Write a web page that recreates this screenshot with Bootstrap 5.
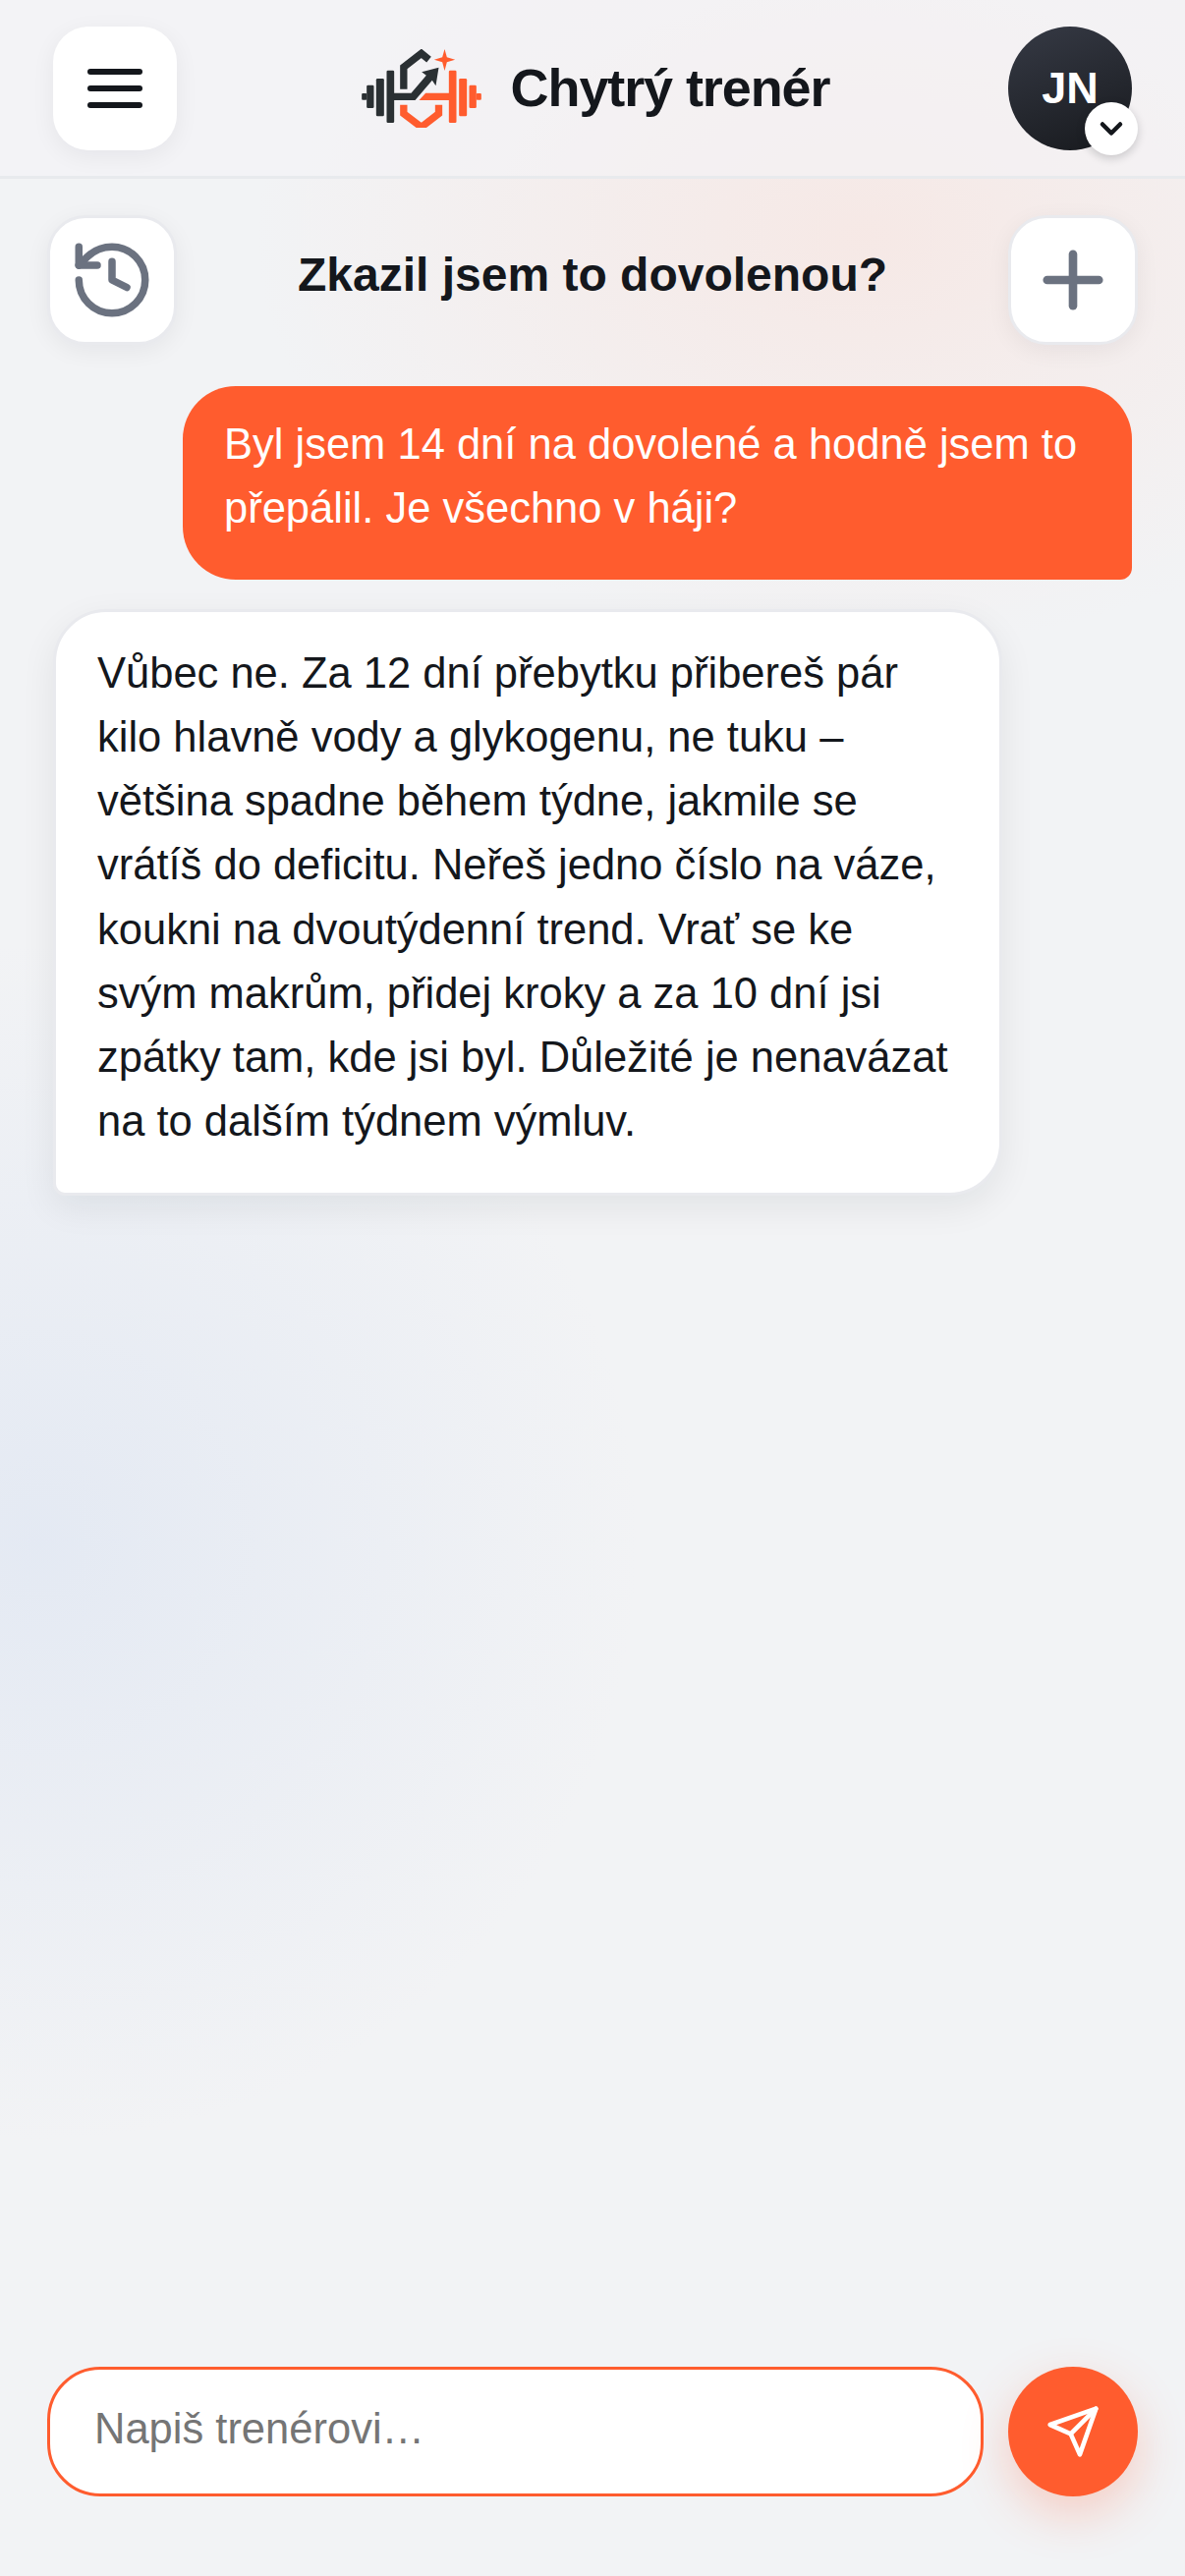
<!DOCTYPE html>
<html lang="cs">
  <head>
    <meta charset="UTF-8" />
    <meta name="viewport" content="width=device-width, initial-scale=1.0" />
    <title>Chytrý trenér</title>
    <link
      rel="stylesheet"
      href="https://cdn.jsdelivr.net/npm/bootstrap@5.3.3/dist/css/bootstrap.min.css"
    />
    <script src="https://cdn.jsdelivr.net/npm/bootstrap@5.3.3/dist/js/bootstrap.bundle.min.js"></script>
    <style>
      body {
        min-height: 2622px;
        font-family: "Liberation Sans", Arial, sans-serif;
        font-size: 43.5px;
        color: #14171c;
        background:
          radial-gradient(circle 610px at 40px 1570px, rgba(205, 218, 240, 0.38), rgba(205, 218, 240, 0) 100%),
          radial-gradient(ellipse 620px 420px at 880px 240px, rgba(250, 222, 214, 0.5), rgba(250, 222, 214, 0) 100%),
          #f2f3f5;
      }
      .top-bar {
        height: 182px;
        padding: 0 54px;
        background: rgba(243, 244, 246, 0.6);
        border-bottom: 3px solid #e8eaed;
      }
      .square-btn {
        width: 126px;
        height: 126px;
        padding: 0;
        border-radius: 36px;
        background: #fff;
        box-shadow: 0 6px 24px rgba(20, 23, 28, 0.06);
      }
      .square-btn.outlined {
        width: 132px;
        height: 132px;
        border: 3px solid #e9eaee;
        border-radius: 39px;
        color: #6b7280;
      }
      .menu-lines {
        width: 56px;
      }
      .menu-lines span {
        display: block;
        height: 6px;
        margin: 11px 0;
        border-radius: 3px;
        background: #14171c;
      }
      .brand-logo {
        margin-right: 30px;
      }
      .brand-name {
        font-size: 54px;
        font-weight: 700;
        letter-spacing: -1.1px;
      }
      .top-brand {
        margin-left: 6px;
      }
      .user-avatar {
        width: 126px;
        height: 126px;
        font-size: 45px;
        font-weight: 700;
        background: linear-gradient(160deg, #363a45, #17191d);
      }
      .avatar-caret {
        right: -6px;
        bottom: -5px;
        width: 54px;
        height: 54px;
        background: #fff;
        box-shadow: 0 3px 10px rgba(20, 23, 28, 0.2);
      }
      .sub-bar {
        padding: 37px 48px 0;
      }
      .chat-title {
        font-size: 48px;
        font-weight: 700;
        margin-top: -10px;
      }
      .chat-list {
        padding: 42px 54px 0;
        gap: 30px;
      }
      .bubble {
        width: 966px;
        line-height: 65.25px;
      }
      .bubble-user {
        padding: 27px 42px 39px;
        color: #fff;
        background: #ff5c2e;
        border-radius: 54px 54px 12px 54px;
      }
      .bubble-coach {
        padding: 30px 42px 39px;
        background: #fff;
        border: 3px solid #e9eaee;
        border-radius: 54px 54px 54px 12px;
        box-shadow: 0 12px 36px rgba(20, 23, 28, 0.07);
      }
      .composer {
        padding: 0 48px 81px;
        gap: 25px;
      }
      .composer-input.form-control {
        height: 132px;
        padding: 0 45px 6px;
        font-size: 43.5px;
        color: #14171c;
        background: #fff;
        border: 3px solid #ff5c2e;
        border-radius: 54px;
        box-shadow: none;
      }
      .composer-input::placeholder {
        color: #757575;
        opacity: 1;
      }
      .send-btn {
        width: 132px;
        height: 132px;
        padding: 0;
        background: #ff5c2e;
        border: 0;
        box-shadow: 0 18px 48px rgba(255, 92, 46, 0.25);
      }
    </style>
  </head>

  <body class="d-flex flex-column">
    <header class="top-bar d-flex align-items-center justify-content-between">
      <button class="btn square-btn border-0 d-flex align-items-center justify-content-center" aria-label="Menu">
        <span class="menu-lines"><span></span><span></span><span></span></span>
      </button>

      <div class="top-brand d-flex align-items-center">
        <svg class="brand-logo" width="122" height="80" viewBox="85 60 365 240" aria-label="Logo">
          <g fill="#2a3033">
            <rect x="85" y="195" width="15" height="20" rx="3" />
            <rect x="100" y="170" width="22" height="70" rx="4" />
            <rect x="129" y="150" width="24" height="115" rx="4" />
            <rect x="161" y="125" width="23" height="160" rx="4" />
            <polygon points="268,130 320,116 311,172 300,155 248,216 183,216 183,194 236,194 282,140" />
          </g>
          <polyline points="213,182 213,115 267,73 290,92" fill="none" stroke="#2a3033" stroke-width="22" />
          <g fill="#ff5c2e">
            <polygon points="260,216 280,194 352,194 352,216" />
            <rect x="351" y="125" width="23" height="160" rx="4" />
            <rect x="382" y="150" width="24" height="115" rx="4" />
            <rect x="413" y="170" width="22" height="70" rx="4" />
            <rect x="435" y="195" width="15" height="20" rx="3" />
            <polygon points="338,60 345,85 370,92 345,100 338,126 331,100 306,92 331,85" />
          </g>
          <polyline points="213,230 213,257 267,298 320,257 320,230" fill="none" stroke="#ff5c2e" stroke-width="22" />
        </svg>
        <span class="brand-name">Chytrý trenér</span>
      </div>

      <div class="user-avatar position-relative rounded-circle d-flex align-items-center justify-content-center text-white">
        JN
        <span class="avatar-caret position-absolute rounded-circle d-flex align-items-center justify-content-center">
          <svg width="36" height="36" viewBox="0 0 24 24" fill="none" stroke="#14171c" stroke-width="3" stroke-linecap="round" stroke-linejoin="round">
            <path d="m6 9 6 6 6-6" />
          </svg>
        </span>
      </div>
    </header>

    <section class="sub-bar d-flex align-items-center justify-content-between">
      <button class="btn square-btn outlined d-flex align-items-center justify-content-center" aria-label="Historie">
        <svg width="90" height="90" viewBox="0 0 24 24" fill="none" stroke="currentColor" stroke-width="2" stroke-linecap="round" stroke-linejoin="round">
          <path d="M3 12a9 9 0 1 0 9-9 9.75 9.75 0 0 0-6.74 2.74L3 8" />
          <path d="M3 3v5h5" />
          <path d="M12 7v5l4 2" />
        </svg>
      </button>
      <div class="chat-title">Zkazil jsem to dovolenou?</div>
      <button class="btn square-btn outlined d-flex align-items-center justify-content-center" aria-label="Nový chat">
        <svg width="90" height="90" viewBox="0 0 24 24" fill="none" stroke="currentColor" stroke-width="2.3" stroke-linecap="round" stroke-linejoin="round">
          <path d="M5 12h14" />
          <path d="M12 5v14" />
        </svg>
      </button>
    </section>

    <main class="chat-list d-flex flex-column flex-grow-1">
      <div class="bubble bubble-user align-self-end">Byl jsem 14 dní na dovolené a hodně jsem to přepálil. Je všechno v háji?</div>
      <div class="bubble bubble-coach align-self-start">Vůbec ne. Za 12 dní přebytku přibereš pár kilo hlavně vody a glykogenu, ne tuku – většina spadne během týdne, jakmile se vrátíš do deficitu. Neřeš jedno číslo na váze, koukni na dvoutýdenní trend. Vrať se ke svým makrům, přidej kroky a za 10 dní jsi zpátky tam, kde jsi byl. Důležité je nenavázat na to dalším týdnem výmluv.</div>
    </main>

    <footer class="composer d-flex align-items-center">
      <input class="composer-input form-control flex-grow-1" type="text" placeholder="Napiš trenérovi…" aria-label="Zpráva" />
      <button class="btn send-btn rounded-circle flex-shrink-0 d-flex align-items-center justify-content-center" aria-label="Odeslat">
        <svg width="56" height="56" viewBox="0 0 24 24" fill="none" stroke="#fff" stroke-width="2" stroke-linecap="round" stroke-linejoin="round">
          <path d="m22 2-7 20-4-9-9-4Z" />
          <path d="M22 2 11 13" />
        </svg>
      </button>
    </footer>
  </body>
</html>
